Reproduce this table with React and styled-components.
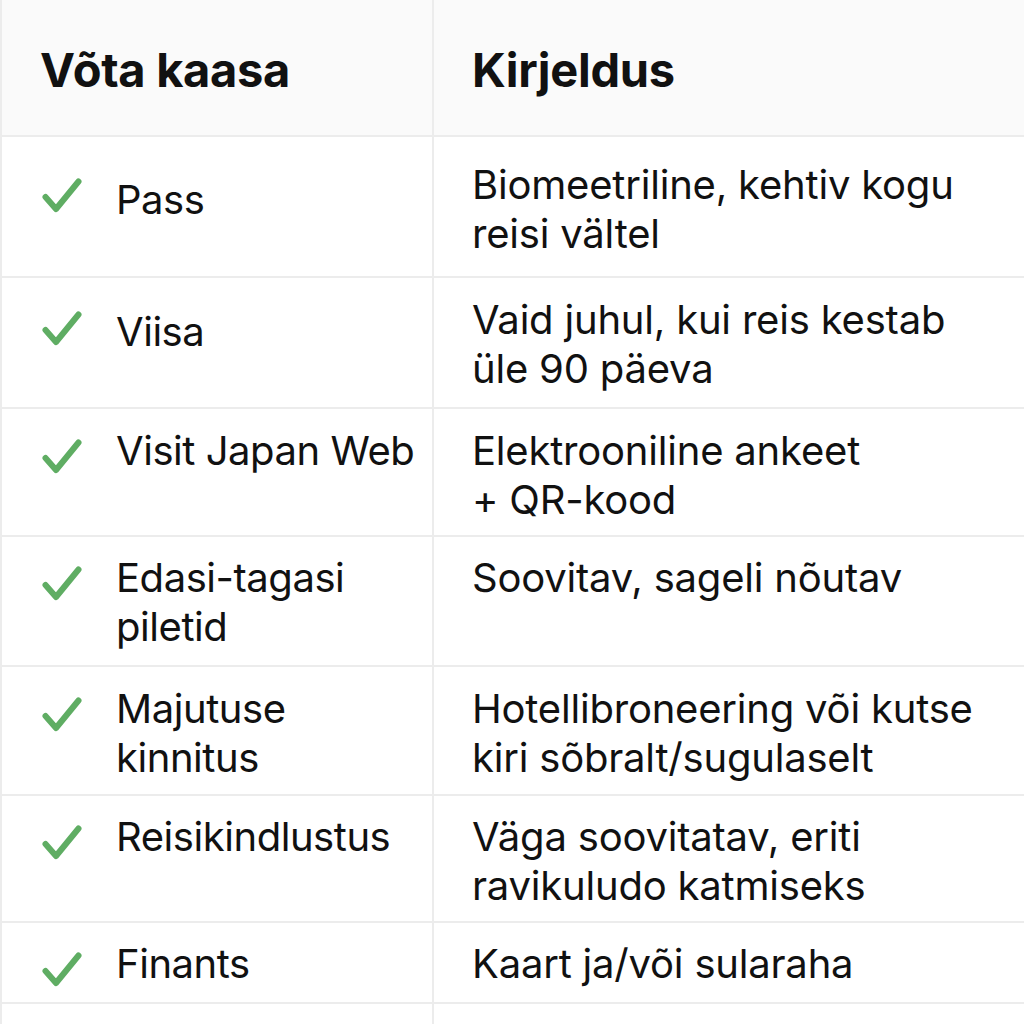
import styled, { createGlobalStyle } from 'styled-components'

const GlobalStyle = createGlobalStyle`
  html, body {
    margin: 0;
    padding: 0;
    background: #ffffff;
  }
  body {
    font-family: Inter, "Noto Sans", "Liberation Sans", sans-serif;
    color: #111111;
  }
`

// lines are split the same way the reference breaks them
const items = [
    { name: ['Pass'], desc: ['Biomeetriline, kehtiv kogu', 'reisi vältel'], top: 23, bottom: 18, nudge: 15, shift: 5 },
    { name: ['Viisa'], desc: ['Vaid juhul, kui reis kestab', 'üle 90 päeva'], top: 17, bottom: 14, nudge: 12, shift: 3 },
    { name: ['Visit Japan Web'], desc: ['Elektrooniline ankeet', '+ QR-kood'], top: 17, bottom: 11 },
    { name: ['Edasi-tagasi', 'piletid'], desc: ['Soovitav, sageli nõutav'], top: 16, bottom: 14 },
    { name: ['Majutuse', 'kinnitus'], desc: ['Hotellibroneering või kutse', 'kiri sõbralt/sugulaselt'], top: 17, bottom: 12 },
    { name: ['Reisikindlustus'], desc: ['Väga soovitatav, eriti', 'ravikuludo katmiseks'], top: 16, bottom: 11 },
    { name: ['Finants'], desc: ['Kaart ja/või sularaha'], top: 16, bottom: 14 },
]

const Check = () => (
    <CheckIcon viewBox="0 0 40 36" width="40" height="36">
        <path d="M3.5 19 L14 31 L36.5 3.5" fill="none" stroke="#5fad63" strokeWidth="6"
            strokeLinecap="round" strokeLinejoin="round" />
    </CheckIcon>
)

const Lines = ({ lines }) => lines.map((line, i) => <Line key={i}>{line}</Line>)

const App = () => {
    return (
        <>
            <GlobalStyle />
            <Table>
                <HeadCell>Võta kaasa</HeadCell>
                <HeadCell>Kirjeldus</HeadCell>
                {items.map((item, index) => (
                    <Row key={index}>
                        <NameCell top={item.top} bottom={item.bottom}>
                            <CheckSlot shift={item.shift || 0}>
                                <Check />
                            </CheckSlot>
                            <NameText nudge={item.nudge || 0}>
                                <Lines lines={item.name} />
                            </NameText>
                        </NameCell>
                        <DescCell top={item.top} bottom={item.bottom}>
                            <DescText>
                                <Lines lines={item.desc} />
                            </DescText>
                        </DescCell>
                    </Row>
                ))}
                <Row>
                    <NameCell top={16} bottom={14} />
                    <DescCell top={16} bottom={14} />
                </Row>
            </Table>
        </>
    )
}

const Table = styled.div`
    display: grid;
    grid-template-columns: 432px 1fr;
    width: 1026px;
    border-left: 2px solid #ececec;
`

const HeadCell = styled.div`
    height: 137px;
    box-sizing: border-box;
    padding: 4px 0 0 38px;
    display: flex;
    align-items: center;
    background: #fafafa;
    border-bottom: 2px solid #ececec;
    font-size: 47px;
    font-weight: 700;
    letter-spacing: -0.3px;
    color: #111;

    &:first-child {
        border-right: 2px solid #ececec;
    }
`

const Row = styled.div`
    display: contents;
`

const Cell = styled.div`
    box-sizing: border-box;
    padding-top: ${props => props.top}px;
    padding-bottom: ${props => props.bottom}px;
    border-bottom: 2px solid #ececec;
    min-height: 80px;
`

const NameCell = styled(Cell)`
    display: flex;
    align-items: flex-start;
    padding-left: 40px;
    padding-right: 4px;
    border-right: 2px solid #ececec;
`

const DescCell = styled(Cell)`
    padding-left: 38px;
    padding-right: 20px;
`

const CheckSlot = styled.div`
    width: 74px;
    flex-shrink: 0;
    padding-top: ${props => 13 + props.shift}px;
`

const CheckIcon = styled.svg`
    display: block;
`

const Line = styled.div`
    white-space: nowrap;
`

const NameText = styled.div`
    margin-top: ${props => props.nudge}px;
    font-size: 40px;
    line-height: 49px;
    letter-spacing: -0.45px;
    color: #111;
`

const DescText = styled.div`
    font-size: 40px;
    line-height: 49px;
    letter-spacing: -0.2px;
    color: #111;
`

export default App
